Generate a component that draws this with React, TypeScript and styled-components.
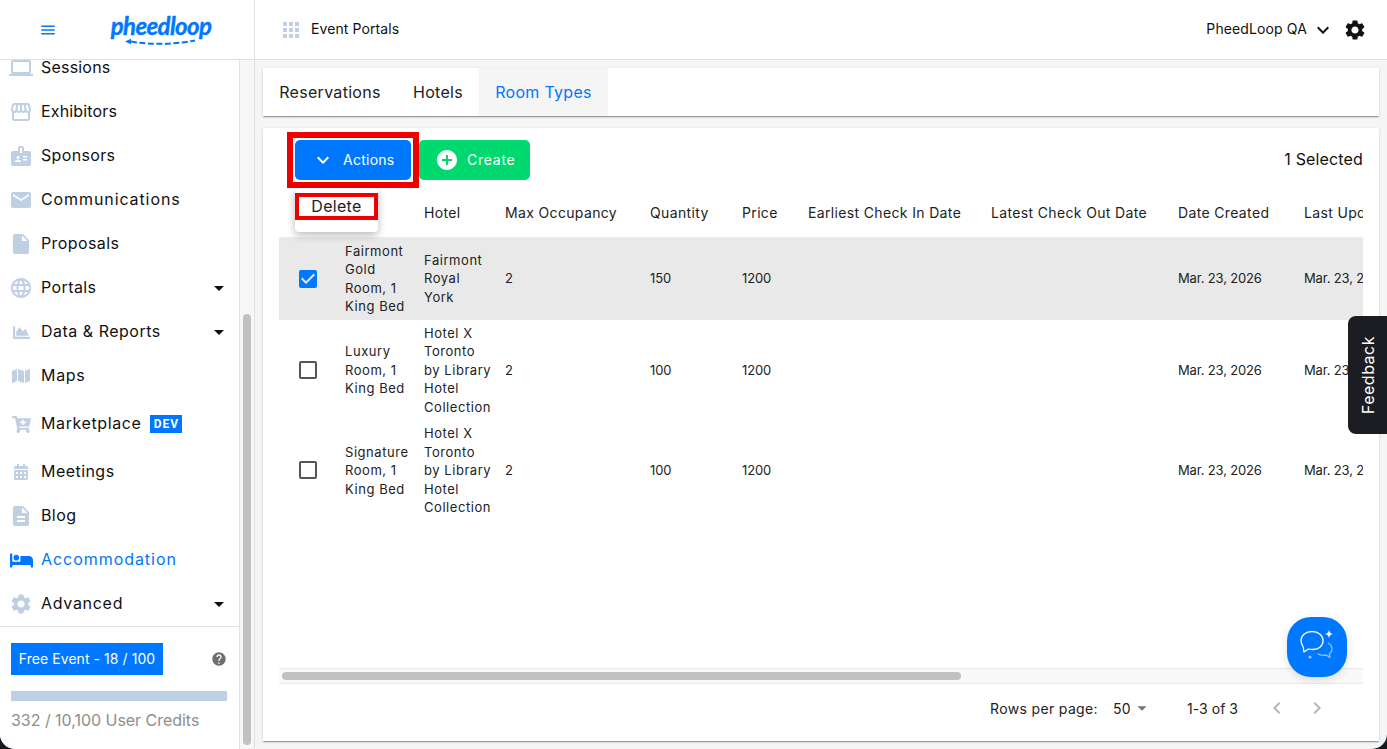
import React from "react";
import styled, { createGlobalStyle } from "styled-components";
import {
  MdMenu, MdLaptop, MdOutlineStorefront, MdBadge, MdEmail, MdInsertDriveFile, MdLanguage,
  MdDescription, MdSettings, MdArrowDropDown, MdHelp, MdApps, MdKeyboardArrowDown,
  MdAddCircle, MdCheckBox, MdCheckBoxOutlineBlank, MdChevronLeft, MdChevronRight,
} from "react-icons/md";
import { FaChartArea, FaCalendarAlt, FaBed, FaMap, FaCartPlus } from "react-icons/fa";

const FONT = `Inter, "Noto Sans", "Liberation Sans", sans-serif`;
const BLUE = "#0077ff";
const RED = "#ef0000";

const Global = createGlobalStyle`
  html, body { margin: 0; padding: 0; height: 100%; background: #15181c; overflow: hidden; }
  #root { height: 100%; }
  * { box-sizing: border-box; }
`;

const Page = styled.div`
  height: 100vh; display: grid; grid-template-rows: 60px minmax(0, 1fr); grid-template-columns: minmax(0, 1fr); overflow: hidden;
  background: #f5f5f5; border-radius: 0 0 15px 15px;
  font-family: ${FONT}; color: #111;
`;
const Header = styled.header`
  display: flex; background: #fff; border-bottom: 1px solid #dedede;
`;
const Brand = styled.div`
  width: 255px; flex: none; display: flex; align-items: center; padding-left: 39px;
  border-right: 1px solid #e2e2e2; color: ${BLUE};
`;
const Logo = styled.div`
  margin-left: 54px; width: 100px; display: flex; flex-direction: column; align-items: center;
`;
const LogoWord = styled.span`
  font: italic 700 24px/26px "Lato", sans-serif; letter-spacing: -.6px; color: ${BLUE};
  -webkit-text-stroke: .4px ${BLUE};
`;
const HeaderMain = styled.div`
  flex: 1; min-width: 0; display: flex; align-items: center; padding: 0 20px 0 24px;
`;
const HeaderTitle = styled.span`
  margin-left: 8px; font-size: 14px; letter-spacing: .1px; flex: 1; padding-bottom: 2px;
`;
const OrgName = styled.span`
  font-size: 14px; letter-spacing: .12px; padding-bottom: 2px;
`;
const OrgCaret = styled.span`
  display: flex; margin: 0 8px 0 4px;
`;
const Body = styled.div`
  display: flex; min-height: 0; min-width: 0;
`;
const Sidebar = styled.aside`
  width: 240px; flex: none; background: #fff; display: flex; flex-direction: column;
  border-right: 1px solid #e2e2e2;
`;
const NavClip = styled.nav`
  flex: 1; min-height: 0; overflow: hidden; border-bottom: 1px solid #e2e2e2;
`;
const NavList = styled.div`
  margin-top: -14px;
`;
const NavRow = styled.div<{ $tall?: boolean; $active?: boolean }>`
  height: ${(p) => (p.$tall ? 52 : 44)}px; display: flex; align-items: center; padding: 0 8px 0 9px;
  font-size: 16px; color: ${(p) => (p.$active ? BLUE : "#111")};
`;
const NavIcon = styled.span<{ $active?: boolean }>`
  width: 24px; height: 24px; margin-right: 8px; display: flex; align-items: center; justify-content: center;
  color: ${(p) => (p.$active ? BLUE : "#bfcfe4")}; flex: none;
`;
const NavLabel = styled.span<{ $track: number }>`
  flex: 1; display: flex; align-items: center; letter-spacing: ${(p) => p.$track}px; padding-bottom: 2px;
`;
const DevTag = styled.span`
  background: ${BLUE}; color: #fff; font: 700 12px/18px "Roboto", sans-serif; letter-spacing: 1px;
  width: 32px; text-align: center; margin-left: 9px; margin-top: 1px;
`;
const SideFoot = styled.div`
  height: 122px; flex: none; padding: 16px 12px 0 11px;
`;
const PlanRow = styled.div`
  display: flex; align-items: center; justify-content: space-between;
`;
const PlanBadge = styled.span`
  background: ${BLUE}; color: #fff; font-size: 14px; letter-spacing: .06px; height: 32px; width: 152px;
  display: flex; align-items: center; justify-content: center; padding-bottom: 2px;
`;
const HelpIcon = styled.span`
  display: flex; color: #6e6e6e;
`;
const CreditBar = styled.div`
  height: 10px; background: #bfcfe4; margin-top: 16px;
`;
const CreditText = styled.div`
  color: #8e8e8e; font-size: 16px; margin-top: 9px; letter-spacing: -.03px;
`;
const ScrollTrack = styled.div`
  width: 15px; flex: none; background: #f7f7f7; border-right: 1px solid #e2e2e2;
  padding: 254px 3px 4px 3px; display: flex;
`;
const ScrollThumb = styled.div`
  flex: 1; background: #c1c1c1; border-radius: 4px;
`;
const Main = styled.main`
  flex: 1; min-width: 0; padding: 8px 8px 8px; display: flex; flex-direction: column; gap: 12px;
`;
const shadow = `box-shadow: 0 2px 1px -1px rgba(0,0,0,.2), 0 1px 1px 0 rgba(0,0,0,.14), 0 1px 3px 0 rgba(0,0,0,.12);`;
const TabBar = styled.div`
  height: 48px; flex: none; background: #fff; ${shadow} display: flex;
`;
const Tab = styled.div<{ $active?: boolean; $w: number }>`
  width: ${(p) => p.$w}px; display: flex; align-items: center; justify-content: center; font-size: 16px; letter-spacing: .3px; padding-bottom: 1px;
  background: ${(p) => (p.$active ? "#f5f5f5" : "#fff")}; color: ${(p) => (p.$active ? BLUE : "#222")};
`;
const Card = styled.section`
  flex: 1; min-height: 0; min-width: 0; background: #fff; ${shadow} padding: 0 16px 9px; display: flex; flex-direction: column;
`;
const Toolbar = styled.div`
  position: relative; height: 60px; flex: none; display: flex; align-items: flex-start; padding: 12px 0 0 16px; gap: 8px;
`;
const ActionBtn = styled.div`
  position: relative; width: 116px; height: 40px; border-radius: 5px; background: ${BLUE}; color: #fff; font-size: 14px; letter-spacing: .25px;
  display: flex; align-items: center; padding-left: 16px; gap: 8px;
  &::after { content: ""; position: absolute; inset: -8px; border: 6px solid ${RED}; }
`;
const CreateBtn = styled.div`
  width: 111px; height: 40px; border-radius: 5px; background: #00d96f; color: #fff; font-size: 14px; letter-spacing: .75px;
  display: flex; align-items: center; padding-left: 16px; gap: 8px;
`;
const BtnLabel = styled.span`
  padding-bottom: 2px;
`;
const Selected = styled.div`
  margin-left: auto; font-size: 16px; line-height: 38px; letter-spacing: .15px;
`;
const Menu = styled.div`
  position: absolute; left: 16px; top: 60px; width: 83px; height: 44px; background: #fff; border-radius: 4px;
  box-shadow: 0 3px 8px rgba(0,0,0,.28); padding-top: 5px; z-index: 3;
`;
const MenuItem = styled.div`
  height: 27px; border: 4px solid ${RED}; font-size: 16px; letter-spacing: .3px; color: #222; display: flex; align-items: center; justify-content: center;
  line-height: 1; background: #fff; padding-bottom: 2px;
`;
const TableClip = styled.div`
  flex: 1; min-height: 0; overflow: hidden;
`;
const Table = styled.table`
  border-collapse: collapse; table-layout: fixed; width: 1151px; font-size: 13px; letter-spacing: .55px;
`;
const Th = styled.th<{ $w: number }>`
  width: ${(p) => p.$w}px; height: 49px; text-align: left; font-weight: 400; font-size: 14px; letter-spacing: .35px; padding: 0; white-space: nowrap;
  border-bottom: 1px solid #eee; overflow: hidden; color: #222;
`;
const Tr = styled.tr<{ $selected?: boolean }>`
  background: ${(p) => (p.$selected ? "#e9e9e9" : "#fff")};
`;
const Td = styled.td<{ $num?: boolean }>`
  padding: 4px 0; line-height: 18.5px; white-space: pre-line; color: #222; vertical-align: middle; overflow: hidden;
  letter-spacing: ${(p) => (p.$num ? "-.15px" : "inherit")};
`;
const CheckCell = styled.span<{ $on?: boolean }>`
  display: flex; padding-left: 17px; color: ${(p) => (p.$on ? BLUE : "#555")};
`;
const HScroll = styled.div`
  height: 16px; flex: none; background: #f9f9f9; border-top: 1px solid #e8e8e8; border-bottom: 1px solid #e8e8e8; padding: 3px;
`;
const HThumb = styled.div`
  width: 679px; height: 8px; background: #c1c1c1; border-radius: 4px;
`;
const Pager = styled.div`
  height: 48px; flex: none; display: flex; align-items: center; font-size: 14px; letter-spacing: .35px; padding-left: 711px; color: #222;
`;
const PagerSize = styled.span`
  margin-left: 15px; display: flex; align-items: center; width: 74px;
`;
const PagerCount = styled.span`
  width: 78px; letter-spacing: .05px;
`;
const PagerNav = styled.span`
  display: flex; color: #b5b5b5; gap: 16px;
`;
const Feedback = styled.div`
  position: fixed; right: 0; top: 316px; width: 39px; height: 118px; background: #1b1d22; color: #fff; border-radius: 8px 0 0 8px;
  display: flex; align-items: center; justify-content: center; font-size: 16px; letter-spacing: .5px;
`;
const FeedbackText = styled.span`
  writing-mode: vertical-rl; transform: rotate(180deg);
`;
const ChatBtn = styled.div`
  position: fixed; left: 1287px; top: 617px; width: 60px; height: 60px; border-radius: 24px; background: ${BLUE};
  display: flex; align-items: center; justify-content: center; box-shadow: 0 3px 8px rgba(0,0,0,.12);
`;

const nav = [
  { label: "Sessions", track: 0.2, icon: <MdLaptop size={24} /> },
  { label: "Exhibitors", track: 0.15, icon: <MdOutlineStorefront size={24} /> },
  { label: "Sponsors", track: 0.35, icon: <MdBadge size={24} /> },
  { label: "Communications", track: 0.9, icon: <MdEmail size={26} /> },
  { label: "Proposals", track: 0.4, icon: <MdInsertDriveFile size={24} /> },
  { label: "Portals", track: 0.4, icon: <MdLanguage size={24} />, caret: true },
  { label: "Data & Reports", track: 0.5, icon: <FaChartArea size={17} />, caret: true },
  { label: "Maps", track: 0.7, icon: <FaMap size={18} /> },
  { label: "Marketplace", track: 0.6, icon: <FaCartPlus size={19} />, dev: true, tall: true },
  { label: "Meetings", track: 0.45, icon: <FaCalendarAlt size={16} /> },
  { label: "Blog", track: 0.4, icon: <MdDescription size={24} /> },
  { label: "Accommodation", track: 0.95, icon: <FaBed size={23} />, active: true },
  { label: "Advanced", track: 0.7, icon: <MdSettings size={24} />, caret: true },
];
const cols = [
  ["", 66], ["", 79], ["Hotel", 81], ["Max Occupancy", 145], ["Quantity", 92], ["Price", 66],
  ["Earliest Check In Date", 183], ["Latest Check Out Date", 187], ["Date Created", 126], ["Last Updated", 126],
] as const;
const rows = [
  { name: "Fairmont\nGold\nRoom, 1\nKing Bed", hotel: "Fairmont\nRoyal\nYork", qty: "150", on: true },
  { name: "Luxury\nRoom, 1\nKing Bed", hotel: "Hotel X\nToronto\nby Library\nHotel\nCollection", qty: "100" },
  { name: "Signature\nRoom, 1\nKing Bed", hotel: "Hotel X\nToronto\nby Library\nHotel\nCollection", qty: "100" },
];

export default function App() {
  return (
    <Page>
      <Global />
      <Header>
        <Brand>
          <MdMenu size={18} />
          <Logo>
            <LogoWord>pheedloop</LogoWord>
            <svg width="72" height="8" viewBox="0 0 72 8" style={{ marginTop: -1 }}>
              <path d="M0 3.5 6 .8v5.400z" fill={BLUE} />
              <path d="M6 3.500C26 7 48 6.500 70 2.500" fill="none" stroke={BLUE} strokeWidth="2" strokeDasharray="6 2.500" />
            </svg>
          </Logo>
        </Brand>
        <HeaderMain>
          <MdApps size={24} color="#bfcfe4" />
          <HeaderTitle>Event Portals</HeaderTitle>
          <OrgName>PheedLoop QA</OrgName>
          <OrgCaret><MdKeyboardArrowDown size={24} /></OrgCaret>
          <MdSettings size={24} />
        </HeaderMain>
      </Header>
      <Body>
        <Sidebar>
          <NavClip>
            <NavList>
              {nav.map((n) => (
                <NavRow key={n.label} $tall={n.tall} $active={n.active}>
                  <NavIcon $active={n.active}>{n.icon}</NavIcon>
                  <NavLabel $track={n.track}>
                    {n.label}
                    {n.dev && <DevTag>DEV</DevTag>}
                  </NavLabel>
                  {n.caret && <MdArrowDropDown size={24} color="#111" />}
                </NavRow>
              ))}
            </NavList>
          </NavClip>
          <SideFoot>
            <PlanRow>
              <PlanBadge>Free Event - 18 / 100</PlanBadge>
              <HelpIcon><MdHelp size={16} /></HelpIcon>
            </PlanRow>
            <CreditBar />
            <CreditText>332 / 10,100 User Credits</CreditText>
          </SideFoot>
        </Sidebar>
        <ScrollTrack><ScrollThumb /></ScrollTrack>
        <Main>
          <TabBar>
            <Tab $w={134}>Reservations</Tab>
            <Tab $w={82}>Hotels</Tab>
            <Tab $w={129} $active>Room Types</Tab>
          </TabBar>
          <Card>
            <Toolbar>
              <ActionBtn><MdKeyboardArrowDown size={24} /><BtnLabel>Actions</BtnLabel></ActionBtn>
              <CreateBtn><MdAddCircle size={24} /><BtnLabel>Create</BtnLabel></CreateBtn>
              <Selected>1 Selected</Selected>
              <Menu><MenuItem>Delete</MenuItem></Menu>
            </Toolbar>
            <TableClip>
              <Table>
                <thead>
                  <tr>{cols.map(([h, w], i) => <Th key={i} $w={w}>{h}</Th>)}</tr>
                </thead>
                <tbody>
                  {rows.map((r) => (
                    <Tr key={r.name} $selected={r.on}>
                      <Td>
                        <CheckCell $on={r.on}>
                          {r.on ? <MdCheckBox size={24} /> : <MdCheckBoxOutlineBlank size={24} />}
                        </CheckCell>
                      </Td>
                      <Td>{r.name}</Td>
                      <Td>{r.hotel}</Td>
                      <Td>2</Td>
                      <Td $num>{r.qty}</Td>
                      <Td $num>1200</Td>
                      <Td />
                      <Td />
                      <Td $num>Mar. 23, 2026</Td>
                      <Td $num>Mar. 23, 2026</Td>
                    </Tr>
                  ))}
                </tbody>
              </Table>
            </TableClip>
            <HScroll><HThumb /></HScroll>
            <Pager>
              Rows per page:
              <PagerSize>50<MdArrowDropDown size={22} color="#777" /></PagerSize>
              <PagerCount>1-3 of 3</PagerCount>
              <PagerNav><MdChevronLeft size={24} /><MdChevronRight size={24} /></PagerNav>
            </Pager>
          </Card>
        </Main>
      </Body>
      <Feedback><FeedbackText>Feedback</FeedbackText></Feedback>
      <ChatBtn>
        <svg width="36" height="36" viewBox="0 0 36 36" fill="none">
          <path d="M13 2.500c6 0 11 3.500 11 9s-4 9-10 9c-2 0-3 0-4.500-.500l-4.500 3-.800-5C2.700 15.500 2 13.500 2 11.500 2 6 7 2.500 13 2.500z" stroke="#fff" strokeWidth="1.300" />
          <path d="M29 14c3 1.500 4 4 4 6 0 2.500-1.500 4-2.500 4.800l.3 3.500-3.800-2.300c-3 .800-6 .500-8.500-1.500" stroke="#fff" strokeOpacity=".55" strokeWidth="1.300" />
          <path d="M30 1c.4 2.500 1.500 3.600 4 4-2.500.4-3.600 1.500-4 4-.4-2.500-1.500-3.600-4-4 2.500-.4 3.600-1.500 4-4z" fill="#fff" />
          <circle cx="11" cy="28" r="1.500" fill="#fff" fillOpacity=".6" />
        </svg>
      </ChatBtn>
    </Page>
  );
}
